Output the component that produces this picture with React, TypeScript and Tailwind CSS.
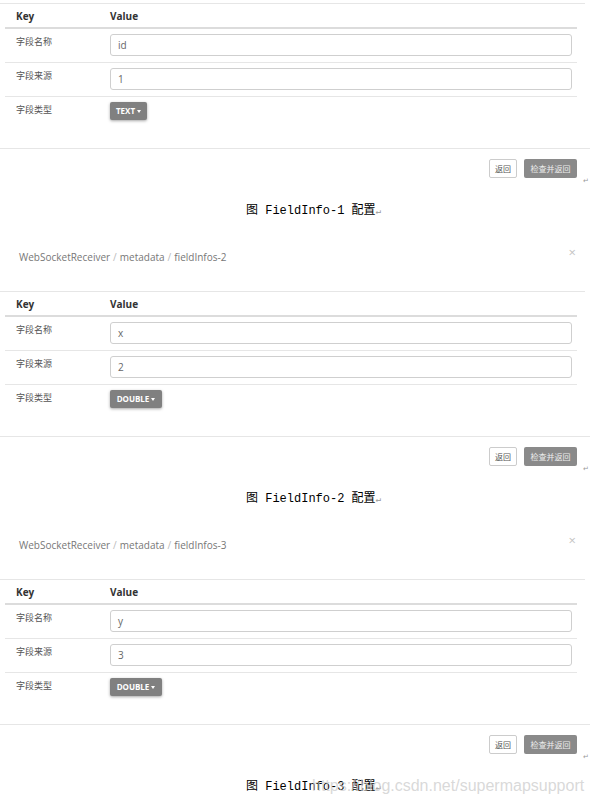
const ui = "font-['Open_Sans','Noto_Sans_CJK_SC',sans-serif]";
const cap = "font-['Liberation_Mono','Noto_Sans_CJK_SC',monospace]";

type Field = { name: string; source: string; type: string; typeW: string };

function Row({ label, last, children }: { label: string; last?: boolean; children: React.ReactNode }) {
	return (
		<div className={last ? "flex h-[51px]" : "flex h-[34px] border-b border-[#e6e6e6]"}>
			<div className="w-[105px] pl-[11px] pt-[7px] text-[9px] leading-[12px] text-[#555]">{label}</div>
			<div className="pt-[5px]">{children}</div>
		</div>
	);
}

function Input({ value }: { value: string }) {
	return (
		<div className="flex h-[22px] w-[462px] items-center rounded-[3px] border border-[#cfcfcf] pl-[7px] text-[10px] text-[#666]">
			{value}
		</div>
	);
}

function Section({ crumb, field, caption }: { crumb?: string; field: Field; caption: string }) {
	return (
		<div>
			{crumb ? (
				<div className="flex h-[72px] w-[585px] items-center justify-between pl-[19px] pr-[9px] pt-[4px] text-[10px] text-[#777]">
					<span>
						{crumb.split(" / ").map((c, i) => (
							<span key={i}>
								{i > 0 && <span className="px-[3px] text-[#bbb]">/</span>}
								{c}
							</span>
						))}
					</span>
					<span className="-mt-[8px] text-[13px] text-[#c4c4c4]">×</span>
				</div>
			) : (
				<div className="h-[3px]" />
			)}
			<div className="w-[585px] border-t border-[#e6e6e6] pl-[5px]">
				<div className="w-[572px]">
					<div className="flex h-[25px] items-center border-b-2 border-[#dcdcdc] pt-[1px] text-[10px] font-bold text-[#333]">
						<div className="w-[105px] pl-[11px]">Key</div>
						<div>Value</div>
					</div>
					<Row label="字段名称">
						<Input value={field.name} />
					</Row>
					<Row label="字段来源">
						<Input value={field.source} />
					</Row>
					<Row label="字段类型" last>
						<div
							className={`flex h-[18px] ${field.typeW} items-center justify-center gap-[2px] rounded-[2px] bg-[#808080] text-[8px] font-bold text-white shadow-[0_1px_3px_rgba(0,0,0,0.35)]`}>
							{field.type}
							<span className="border-x-[2.5px] border-t-[3px] border-x-transparent border-t-white" />
						</div>
					</Row>
				</div>
			</div>
			<div className="flex w-[590px] items-end justify-end border-t border-[#e6e6e6] pt-[10px]">
				<div className="flex gap-[7px] text-[8px]">
					<div className="flex h-[19px] w-[28px] items-center justify-center rounded-[2px] border border-[#ccc] bg-white text-[#555]">
						返回
					</div>
					<div className="flex h-[19px] w-[53px] items-center justify-center rounded-[2px] bg-[#8a8a8a] text-[#eee]">
						检查并返回
					</div>
				</div>
				<span className="-mb-[6px] ml-[6px] mr-[1px] text-[7px] leading-none text-[#999]">↵</span>
			</div>
			<div className={`${cap} mt-[25px] h-[16px] pl-[246px] text-[12px] leading-[16px] text-black`}>
				{caption}
				<span className="text-[9px] text-[#999]">↵</span>
			</div>
		</div>
	);
}

export default function App() {
	return (
		<div className={`${ui} relative h-[800px] w-[590px] overflow-hidden bg-white`}>
			<Section field={{ name: "id", source: "1", type: "TEXT", typeW: "w-[37px]" }} caption="图 FieldInfo-1 配置" />
			<Section
				crumb="WebSocketReceiver / metadata / fieldInfos-2"
				field={{ name: "x", source: "2", type: "DOUBLE", typeW: "w-[52px]" }}
				caption="图 FieldInfo-2 配置"
			/>
			<Section
				crumb="WebSocketReceiver / metadata / fieldInfos-3"
				field={{ name: "y", source: "3", type: "DOUBLE", typeW: "w-[52px]" }}
				caption="图 FieldInfo-3 配置"
			/>
			<div className="pointer-events-none absolute left-[312px] top-[774px] whitespace-nowrap font-['Liberation_Sans',sans-serif] text-[16px] text-[#c8c8c8]/70">
				https://blog.csdn.net/supermapsupport
			</div>
		</div>
	);
}
